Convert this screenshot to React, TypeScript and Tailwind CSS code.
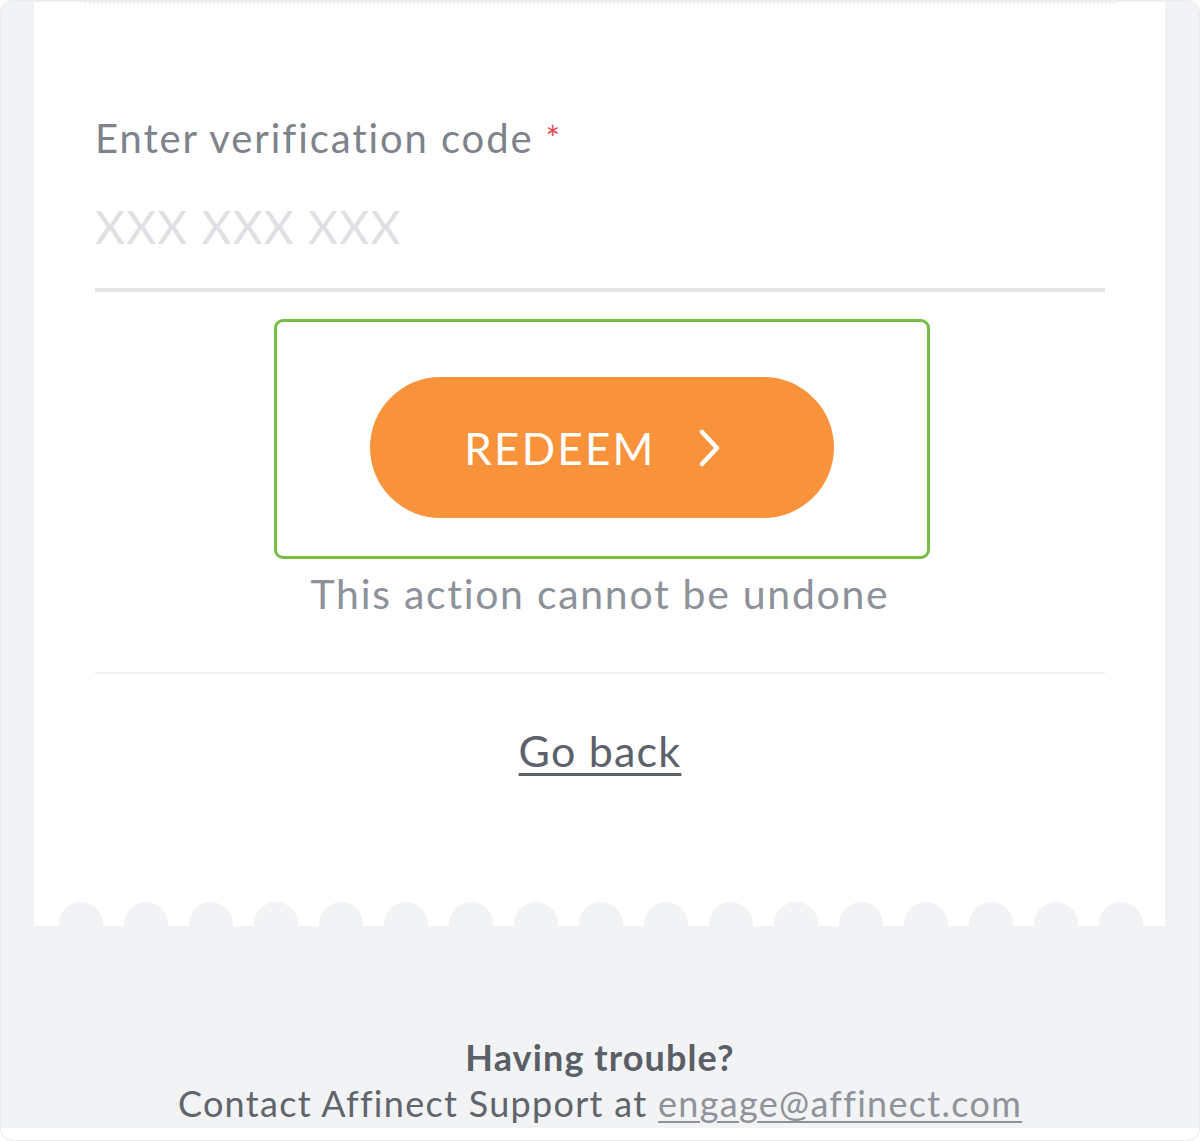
import React from "react";

const font = { fontFamily: "Lato, 'Open Sans', sans-serif" };

function Domes() {
  const items = Array.from({ length: 17 });
  return (
    <div className="flex h-[24px] items-end bg-white pl-[25px]">
      {items.map((_, i) => (
        <div key={i} className="mr-[21px] h-[24px] w-[44px] shrink-0 rounded-t-full bg-[#f2f3f5]" />
      ))}
    </div>
  );
}

export default function App() {
  return (
    <div
      className="h-[1141px] w-[1200px] overflow-hidden rounded-[12px] border border-[#e9ebee] bg-white"
      style={font}
    >
      <div className="flex h-[1127px] flex-col bg-[#f2f3f5] pt-[1px]">
        <div className="mx-[33px] mr-[34px] flex flex-col bg-white">
          <div className="mx-[50px] border-t-2 border-dotted border-[#eceef0]" />
          <div className="flex flex-col px-[61px] pr-[60px] pt-[110px]">
            <div className="text-[40px] leading-[48px] tracking-[1.9px] text-[#7d828b]">
              Enter verification code{" "}
              <span className="relative top-[-2px] text-[34px] text-[#e0504f]">*</span>
            </div>
            <div className="mt-[36px] text-[46px] leading-[54px] tracking-[1.3px] text-[#dfe0e3]">
              XXX XXX XXX
            </div>
            <div className="mt-[34px] h-[4px] bg-[#e3e4e6]" />
            <div className="mt-[27px] flex justify-center">
              <div className="ml-[4px] flex h-[240px] w-[656px] justify-center rounded-[9px] border-[3px] border-[#77bd45] pt-[55px]">
                <div className="flex h-[141px] w-[464px] items-center justify-center rounded-full bg-[#f8923b] pr-[18px]">
                  <span className="text-[44px] leading-none tracking-[2.2px] text-white">REDEEM</span>
                  <svg className="ml-[42px]" width="24" height="38" viewBox="0 0 24 38" fill="none">
                    <path d="M4 3 L19 19 L4 35" stroke="white" strokeWidth="4.5" strokeLinecap="round" strokeLinejoin="round" />
                  </svg>
                </div>
              </div>
            </div>
            <div className="mt-[11px] text-center text-[41px] leading-[48px] tracking-[1.7px] text-[#8c919a]">
              This action cannot be undone
            </div>
            <div className="mt-[54px] h-[2px] bg-[#f0f1f2]" />
            <div className="mt-[52px] text-center">
              <span className="text-[43px] leading-[50px] tracking-[1.2px] text-[#5c616b] underline decoration-[3px] underline-offset-[6px]">
                Go back
              </span>
            </div>
            <div className="h-[126px]" />
          </div>
          <Domes />
        </div>
        <div className="mt-[109px] text-center text-[36px] font-bold leading-[44px] tracking-[1.1px] text-[#5a5e66]">
          Having trouble?
        </div>
        <div className="mt-[2px] text-center text-[36px] leading-[44px] tracking-[1.3px] text-[#60646c]">
          Contact Affinect Support at{" "}
          <span className="text-[#8e939b] underline decoration-[2px] underline-offset-[4px]">engage@affinect.com</span>
        </div>
      </div>
    </div>
  );
}
